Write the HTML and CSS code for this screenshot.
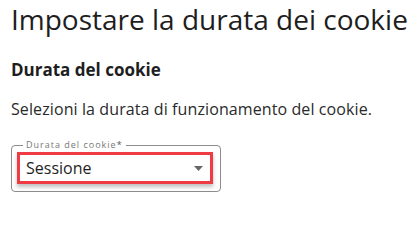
FILE: index.html
```html
<!DOCTYPE html>
<html lang="it">
<head>
<meta charset="utf-8">
<link rel="stylesheet" href="styles.css">
</head>
<body>
<main class="page">
  <h1 class="title">Impostare la durata dei cookie</h1>
  <h2 class="subtitle">Durata del cookie</h2>
  <p class="desc">Selezioni la durata di funzionamento del cookie.</p>
  <fieldset class="field">
    <legend class="field-label">Durata del cookie<span class="req">*</span></legend>
    <div class="select">
      <span class="select-value">Sessione</span>
      <svg class="caret" width="9" height="5" viewBox="0 0 9 5"><path d="M0 0H9L4.5 5Z" fill="#666"/></svg>
    </div>
  </fieldset>
</main>
</body>
</html>
```
FILE: styles.css
```css
html, body {
  margin: 0;
  padding: 0;
  background: #fff;
}
body {
  font-family: "Open Sans", "Noto Sans", sans-serif;
  color: #222;
}
.page {
  padding: 0 0 0 11px;
  display: flex;
  flex-direction: column;
  align-items: flex-start;
}
.title {
  margin: 2px 0 0 0;
  font-size: 28px;
  line-height: 34px;
  font-weight: 400;
  color: #1e1e1e;
}
.subtitle {
  margin: 23px 0 0 0;
  font-size: 17px;
  line-height: 22px;
  font-weight: 700;
  color: #1e1e1e;
}
.desc {
  margin: 17px 0 0 0;
  font-size: 16px;
  line-height: 22px;
  letter-spacing: 0.1px;
  color: #2a2a2a;
}
.field {
  margin: 20px 0 0 0;
  box-sizing: border-box;
  width: 210px;
  padding: 0 5px 7px 5px;
  border: 1px solid #8c8c8c;
  border-radius: 4px;
  min-width: 0;
}
.field-label {
  margin-left: 6px;
  padding: 0 3px;
  font-size: 9px;
  line-height: 10px;
  letter-spacing: 1px;
  color: #777;
}
.req {
  color: #555;
}
.select {
  box-sizing: border-box;
  width: 196px;
  height: 32px;
  margin-top: 2px;
  border: 3px solid #ef3b43;
  box-shadow: 0 3px 4px rgba(0, 0, 0, 0.25);
  display: flex;
  align-items: center;
  justify-content: space-between;
  padding: 0 7px 0 6px;
}
.select-value {
  font-size: 16px;
  color: #1e1e1e;
}
.caret {
  display: block;
}
```
